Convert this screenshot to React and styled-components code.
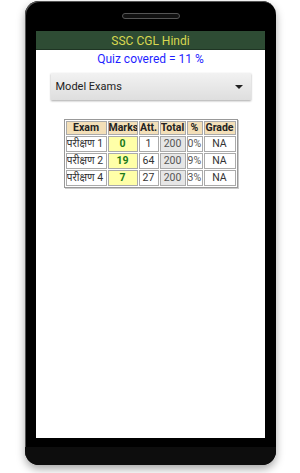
import React from 'react'
import styled, { createGlobalStyle } from 'styled-components'

const GlobalStyle = createGlobalStyle`
  body {
    margin: 0;
    background: #fff;
    font-family: Roboto, "Noto Sans", "Noto Sans Devanagari", sans-serif;
  }
`

const rows = [
  { exam: 'परीक्षण 1', marks: 0, att: 1, total: 200, pct: '0%', grade: 'NA' },
  { exam: 'परीक्षण 2', marks: 19, att: 64, total: 200, pct: '9%', grade: 'NA' },
  { exam: 'परीक्षण 4', marks: 7, att: 27, total: 200, pct: '3%', grade: 'NA' },
]

const App = () => {
  return (
    <Page>
      <GlobalStyle />
      <Phone>
        <Speaker />
        <Screen>
          <TitleBar>SSC CGL Hindi</TitleBar>
          <Covered>Quiz covered = 11 %</Covered>
          <Select>
            <span>Model Exams</span>
            <Arrow />
          </Select>
          <Table>
            <colgroup>
              <col style={{ width: 41 }} />
              <col style={{ width: 30 }} />
              <col style={{ width: 20 }} />
              <col style={{ width: 26 }} />
              <col style={{ width: 16 }} />
              <col style={{ width: 32 }} />
            </colgroup>
            <thead>
              <tr>
                <Th>Exam</Th>
                <Th>Marks</Th>
                <Th>Att.</Th>
                <Th>Total</Th>
                <Th>%</Th>
                <Th>Grade</Th>
              </tr>
            </thead>
            <tbody>
              {rows.map((r) => (
                <tr key={r.exam}>
                  <Td $align="left">{r.exam}</Td>
                  <Td $kind="marks">{r.marks}</Td>
                  <Td>{r.att}</Td>
                  <Td $kind="total">{r.total}</Td>
                  <Td $align="left" $muted>{r.pct}</Td>
                  <Td>{r.grade}</Td>
                </tr>
              ))}
            </tbody>
          </Table>
        </Screen>
        <Chin />
      </Phone>
    </Page>
  )
}

const Page = styled.div`
  width: 300px;
  height: 473px;
  padding-top: 1px;
  box-sizing: border-box;
`

const Phone = styled.div`
  width: 251px;
  margin-left: 25px;
  height: 464px;
  background: #000;
  border-radius: 14px;
  box-shadow: inset 1px 1px 0 #555, 0 4px 8px rgba(0, 0, 0, 0.35);
  display: flex;
  flex-direction: column;
  align-items: center;
  overflow: hidden;
`

const Speaker = styled.div`
  width: 56px;
  height: 4px;
  margin-top: 12px;
  margin-bottom: 12px;
  border: 1px solid #555;
  border-radius: 4px;
  background: #111;
`

const Screen = styled.div`
  width: 229px;
  height: 407px;
  background: #fff;
  display: flex;
  flex-direction: column;
  align-items: center;
`

const Chin = styled.div`
  margin-top: 9px;
  width: 100%;
  flex: 1;
  background: #0d0d0d;
`

const TitleBar = styled.div`
  width: 100%;
  height: 19px;
  background: #2e4c34;
  color: #d8d850;
  font-size: 12px;
  line-height: 20px;
  text-align: center;
  border-bottom: 1px solid #1f3524;
  box-sizing: border-box;
`

const Covered = styled.div`
  color: #1f1fff;
  font-size: 12px;
  line-height: 16px;
  margin-top: 1px;
`

const Select = styled.div`
  width: 200px;
  height: 27px;
  margin-top: 6px;
  box-sizing: border-box;
  padding: 0 8px 0 5px;
  display: flex;
  align-items: center;
  justify-content: space-between;
  background: linear-gradient(#f2f2f2, #dedede);
  box-shadow: 0 1px 2px rgba(0, 0, 0, 0.35);
  font-size: 11px;
  color: #222;
`

const Arrow = styled.div`
  width: 0;
  height: 0;
  border-left: 4px solid transparent;
  border-right: 4px solid transparent;
  border-top: 4px solid #222;
`

const Table = styled.table`
  width: 169px;
  margin-top: 19px;
  border-collapse: separate;
  border-spacing: 1px;
  border: 1px solid #999;
  box-shadow: 1px 1px 0 #ccc;
  font-size: 10.5px;
  table-layout: fixed;
`

const Th = styled.th`
  background: #f3dfb8;
  border: 1px solid #aaa;
  color: #222;
  font-weight: bold;
  height: 12px;
  padding: 0;
  line-height: 12px;
  white-space: nowrap;
  overflow: hidden;
`

const Td = styled.td`
  border: 1px solid #aaa;
  height: 14px;
  line-height: 14px;
  padding: 0;
  white-space: nowrap;
  overflow: hidden;
  text-align: ${(p) => p.$align || 'center'};
  background: ${(p) =>
    p.$kind === 'marks' ? '#ffffa8' : p.$kind === 'total' ? '#e6e6e6' : '#fff'};
  color: ${(p) =>
    p.$kind === 'marks' ? '#1a7a1a' : p.$kind === 'total' || p.$muted ? '#555' : '#333'};
  font-weight: ${(p) => (p.$kind === 'marks' ? 'bold' : 'normal')};
`

export default App
